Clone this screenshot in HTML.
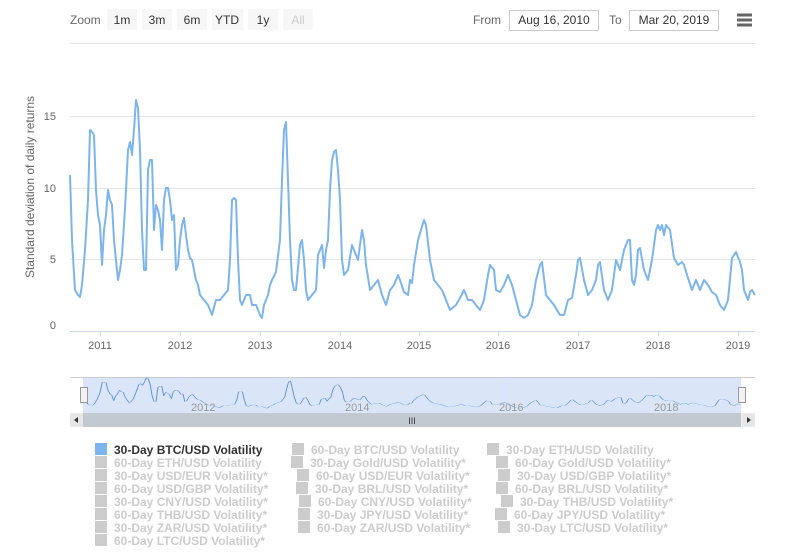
<!DOCTYPE html>
<html><head><meta charset="utf-8"><style>
body{margin:0;background:#fff;width:800px;height:549px;overflow:hidden;font-family:"Liberation Sans",sans-serif}
svg text{font-family:"Liberation Sans",sans-serif}
</style></head><body>
<svg width="800" height="549" viewBox="0 0 800 549" xmlns="http://www.w3.org/2000/svg">
<text x="70" y="24" font-size="12" fill="#666">Zoom</text>
<g font-size="12" fill="#333" text-anchor="middle">
<rect x="107" y="9" width="30" height="21" fill="#f7f7f7"/><text x="122" y="24">1m</text>
<rect x="142" y="9" width="30" height="21" fill="#f7f7f7"/><text x="157" y="24">3m</text>
<rect x="177" y="9" width="30" height="21" fill="#f7f7f7"/><text x="192" y="24">6m</text>
<rect x="212" y="9" width="31" height="21" fill="#f7f7f7"/><text x="227" y="24">YTD</text>
<rect x="248" y="9" width="30" height="21" fill="#f7f7f7"/><text x="263" y="24">1y</text>
<rect x="283" y="9" width="30" height="21" fill="#f7f7f7"/><text x="298" y="24" fill="#ccc">All</text>
</g>
<text x="473" y="24" font-size="12" fill="#666">From</text>
<rect x="509.5" y="10.5" width="89" height="20" fill="#fff" stroke="#ccc"/>
<text x="554" y="24" font-size="12" fill="#333" text-anchor="middle">Aug 16, 2010</text>
<text x="609" y="24" font-size="12" fill="#666">To</text>
<rect x="629.5" y="10.5" width="89" height="20" fill="#fff" stroke="#ccc"/>
<text x="674" y="24" font-size="12" fill="#333" text-anchor="middle">Mar 20, 2019</text>
<g stroke="#666" stroke-width="3"><line x1="737" y1="15" x2="752" y2="15"/><line x1="737" y1="20" x2="752" y2="20"/><line x1="737" y1="25" x2="752" y2="25"/></g>
<g stroke="#e6e6e6" stroke-width="1">
<line x1="70" y1="43.5" x2="755" y2="43.5"/>
<line x1="70" y1="116.5" x2="755" y2="116.5"/>
<line x1="70" y1="188.5" x2="755" y2="188.5"/>
<line x1="70" y1="259.5" x2="755" y2="259.5"/>
</g>
<line x1="70" y1="331.5" x2="755" y2="331.5" stroke="#ccd6eb"/>
<g stroke="#ccd6eb"><line x1="100.5" y1="331" x2="100.5" y2="336"/><line x1="180.5" y1="331" x2="180.5" y2="336"/><line x1="260.5" y1="331" x2="260.5" y2="336"/><line x1="340.5" y1="331" x2="340.5" y2="336"/><line x1="419.5" y1="331" x2="419.5" y2="336"/><line x1="498.5" y1="331" x2="498.5" y2="336"/><line x1="578.5" y1="331" x2="578.5" y2="336"/><line x1="658.5" y1="331" x2="658.5" y2="336"/><line x1="738.5" y1="331" x2="738.5" y2="336"/></g>
<g font-size="11" fill="#666" text-anchor="end">
<text x="56" y="120">15</text><text x="56" y="192">10</text><text x="56" y="263">5</text><text x="56" y="329">0</text>
</g>
<text transform="translate(34,187) rotate(-90)" font-size="12" fill="#666" text-anchor="middle">Standard deviation of daily returns</text>
<g font-size="11" fill="#666" text-anchor="middle">
<text x="100" y="349">2011</text><text x="180" y="349">2012</text><text x="260" y="349">2013</text><text x="340" y="349">2014</text><text x="419" y="349">2015</text><text x="498" y="349">2016</text><text x="578" y="349">2017</text><text x="658" y="349">2018</text><text x="738" y="349">2019</text>
</g>
<defs>
<polyline id="d" fill="none" stroke-linejoin="round" points="70,175 72,240 75,290 78,295 80,297 82,285 85,250 88,200 90,130 92,132 94,135 96,190 98,215 100,225 102,265 104,230 106,215 108,190 110,200 112,205 114,240 116,260 118,280 120,270 122,255 124,225 126,190 128,150 130,142 132,155 134,130 136,100 138,108 140,150 142,230 144,270 146,270 148,170 150,160 152,160 154,230 156,205 158,210 160,220 162,250 164,200 166,188 168,188 170,200 172,220 174,215 176,270 178,265 180,240 182,225 184,218 186,235 188,250 190,258 192,260 194,270 196,280 198,285 200,295 204,300 208,305 212,315 216,300 220,300 224,295 228,290 230,260 232,200 234,198 236,200 238,260 240,300 242,305 244,300 246,295 250,295 252,305 256,305 260,315 262,318 264,305 268,295 270,285 272,280 276,272 280,240 282,180 284,130 286,122 288,180 290,240 292,280 294,290 296,290 300,245 302,240 304,260 306,290 308,300 312,295 316,290 318,255 320,250 322,245 324,268 326,250 328,240 330,190 332,160 334,152 336,150 338,170 340,200 342,260 344,275 348,270 352,245 354,250 358,260 362,230 364,240 366,265 370,290 374,285 378,280 382,295 386,305 390,290 394,285 398,275 400,280 404,292 408,295 410,280 412,283 414,265 418,240 424,220 426,225 430,260 434,280 438,285 442,290 446,300 450,310 456,305 460,298 464,290 468,300 472,300 476,305 480,310 484,300 488,275 490,265 494,270 496,290 500,292 504,285 508,275 512,285 516,300 520,315 524,318 528,315 532,305 536,280 540,265 542,262 546,295 550,300 554,305 560,315 564,315 568,300 572,298 576,275 578,260 580,258 584,280 588,295 592,290 596,280 598,265 600,262 604,290 608,300 612,290 616,260 620,270 624,250 626,245 628,240 630,240 632,280 634,285 636,275 638,250 640,248 644,270 648,280 652,260 656,230 658,225 660,230 662,225 664,235 666,225 670,230 674,258 678,265 682,262 684,265 688,278 692,290 696,280 700,290 704,280 708,285 712,292 716,295 720,305 724,310 728,300 732,258 736,252 740,262 742,270 744,290 748,300 750,292 752,290 755,295"/>
</defs>
<use href="#d" stroke="#7cb5ec" stroke-width="2"/>
<line x1="70" y1="377.5" x2="755" y2="377.5" stroke="#ccc"/>
<rect x="83" y="378" width="658" height="35" fill="#dae6f8"/>
<g stroke="#e6e6e6" opacity="0.6"><line x1="188.5" y1="378" x2="188.5" y2="413"/><line x1="342.5" y1="378" x2="342.5" y2="413"/><line x1="496.5" y1="378" x2="496.5" y2="413"/><line x1="651.5" y1="378" x2="651.5" y2="413"/></g>
<use href="#d" stroke="#5a8ed1" stroke-width="1" transform="matrix(0.9606,0,0,0.14,15.76,363.7)" style="vector-effect:non-scaling-stroke"/>
<g font-size="11" fill="#999"><text x="191" y="411">2012</text><text x="345" y="411">2014</text><text x="499" y="411">2016</text><text x="654" y="411">2018</text></g>
<rect x="80.5" y="387.5" width="7" height="15" fill="#f2f2f2" stroke="#999"/>
<rect x="738.5" y="387.5" width="7" height="15" fill="#f2f2f2" stroke="#999"/>
<rect x="70" y="413" width="685" height="14" fill="#f2f2f2"/>
<rect x="83" y="413" width="658" height="14" fill="#c2c9d1"/>
<text x="412" y="424" font-size="9" fill="#333" text-anchor="middle">III</text>
<rect x="70" y="413.5" width="13" height="13" fill="#e6e6e6"/><path d="M74 420 L78 417 L78 423Z" fill="#333"/>
<rect x="742" y="413.5" width="13" height="13" fill="#e6e6e6"/><path d="M751 420 L747 417 L747 423Z" fill="#333"/>
<g font-size="12" font-weight="bold" fill="#ccc">
<rect x="95" y="443" width="12" height="12" fill="#7cb5ec"/><text x="114" y="454" fill="#333">30-Day BTC/USD Volatility</text>
<rect x="292" y="443" width="12" height="12"/><text x="311" y="454">60-Day BTC/USD Volatility</text>
<rect x="487" y="443" width="12" height="12"/><text x="506" y="454">30-Day ETH/USD Volatility</text>
<rect x="95" y="456" width="12" height="12"/><text x="114" y="467">60-Day ETH/USD Volatility</text>
<rect x="291" y="456" width="12" height="12"/><text x="310" y="467">30-Day Gold/USD Volatility*</text>
<rect x="496" y="456" width="12" height="12"/><text x="515" y="467">60-Day Gold/USD Volatility*</text>
<rect x="95" y="469" width="12" height="12"/><text x="114" y="480">30-Day USD/EUR Volatility*</text>
<rect x="297" y="469" width="12" height="12"/><text x="316" y="480">60-Day USD/EUR Volatility*</text>
<rect x="498" y="469" width="12" height="12"/><text x="517" y="480">30-Day USD/GBP Volatility*</text>
<rect x="95" y="482" width="12" height="12"/><text x="114" y="493">60-Day USD/GBP Volatility*</text>
<rect x="296" y="482" width="12" height="12"/><text x="315" y="493">30-Day BRL/USD Volatility*</text>
<rect x="496" y="482" width="12" height="12"/><text x="515" y="493">60-Day BRL/USD Volatility*</text>
<rect x="95" y="495" width="12" height="12"/><text x="114" y="506">30-Day CNY/USD Volatility*</text>
<rect x="299" y="495" width="12" height="12"/><text x="318" y="506">60-Day CNY/USD Volatility*</text>
<rect x="501" y="495" width="12" height="12"/><text x="520" y="506">30-Day THB/USD Volatility*</text>
<rect x="95" y="508" width="12" height="12"/><text x="114" y="519">60-Day THB/USD Volatility*</text>
<rect x="298" y="508" width="12" height="12"/><text x="317" y="519">30-Day JPY/USD Volatility*</text>
<rect x="495" y="508" width="12" height="12"/><text x="514" y="519">60-Day JPY/USD Volatility*</text>
<rect x="95" y="521" width="12" height="12"/><text x="114" y="532">30-Day ZAR/USD Volatility*</text>
<rect x="298" y="521" width="12" height="12"/><text x="317" y="532">60-Day ZAR/USD Volatility*</text>
<rect x="498" y="521" width="12" height="12"/><text x="517" y="532">30-Day LTC/USD Volatility*</text>
<rect x="95" y="534" width="12" height="12"/><text x="114" y="545">60-Day LTC/USD Volatility*</text>
</g>
</svg>
</body></html>
